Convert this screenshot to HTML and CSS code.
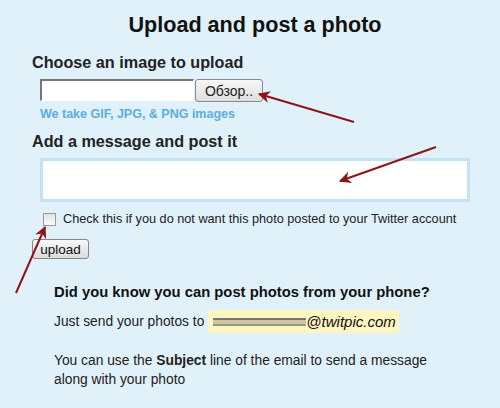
FILE: index.html
```html
<!DOCTYPE html>
<html lang="en">
<head>
    <meta charset="UTF-8">
    <title>Upload and post a photo</title>
    <link rel="stylesheet" href="styles.css">
</head>
<body>
    <div class="page">
        <h1>Upload and post a photo</h1>

        <h2>Choose an image to upload</h2>
        <div class="file-row">
            <span class="file-box"></span>
            <button class="browse">Обзор..</button>
        </div>
        <p class="hint">We take GIF, JPG, &amp; PNG images</p>

        <h2 class="second">Add a message and post it</h2>
        <div class="message"></div>

        <label class="check-row">
            <span class="check"></span>
            Check this if you do not want this photo posted to your Twitter account
        </label>

        <button class="upload">upload</button>

        <div class="phone">
            <h3>Did you know you can post photos from your phone?</h3>
            <p class="send">Just send your photos to
                <span class="email"><span class="blur"></span><em>@twitpic.com</em></span>
            </p>
            <p class="subject">You can use the <b>Subject</b> line of the email to send a message along with your photo</p>
        </div>
    </div>

    <svg class="arrows" width="500" height="408" viewBox="0 0 500 408">
        <defs>
            <marker id="head" viewBox="0 0 10 10" refX="9" refY="5" markerWidth="6" markerHeight="6" orient="auto">
                <path d="M0 0 L10 5 L0 10 L3 5 Z" fill="#8e1418"/>
            </marker>
        </defs>
        <line x1="354" y1="122" x2="259" y2="94" stroke="#8e1418" stroke-width="2" marker-end="url(#head)"/>
        <line x1="436" y1="147" x2="340" y2="181" stroke="#8e1418" stroke-width="2" marker-end="url(#head)"/>
        <line x1="16" y1="293" x2="45" y2="227" stroke="#8e1418" stroke-width="2" marker-end="url(#head)"/>
    </svg>
</body>
</html>
```

FILE: styles.css
```css
body {
    margin: 0;
    background-color: #e1f1fa;
    font-family: "Liberation Sans", Arial, sans-serif;
    color: #222;
    width: 500px;
    height: 408px;
    position: relative;
    overflow: hidden;
}

.page {
    padding: 12px 0 0 32px;
}

h1 {
    margin: 0 0 0 -22px;
    font-size: 21.6px;
    line-height: 26px;
    text-align: center;
    color: #111;
}

h2 {
    margin: 15px 0 0;
    font-size: 16.2px;
    line-height: 19px;
    color: #222;
}

h2.second {
    margin-top: 10px;
}

.file-row {
    display: flex;
    margin: 7px 0 0 8px;
}

.file-box {
    width: 151px;
    height: 19px;
    background: #fff;
    border: 1px solid #fff;
    border-top: 2px solid #777;
    border-left: 2px solid #777;
}

.browse {
    width: 68px;
    height: 23px;
    margin-left: 1px;
    padding: 0;
    font-family: "Liberation Sans", Arial, sans-serif;
    font-size: 14px;
    color: #222;
    background: linear-gradient(#f6f6f6, #dedede);
    border: 1px solid #8a8a8a;
    border-radius: 3px;
}

.hint {
    margin: 5px 0 0 8px;
    font-size: 12.5px;
    line-height: 15px;
    font-weight: bold;
    color: #5aaee0;
}

.message {
    margin: 7px 0 0 8px;
    width: 424px;
    height: 38px;
    background: #fff;
    border: 3px solid #c4e1f5;
}

.check-row {
    display: flex;
    align-items: center;
    margin: 10px 0 0 11px;
    font-size: 12.7px;
    color: #222;
    gap: 7px;
}

.check {
    width: 11px;
    height: 11px;
    border: 1px solid #9a9a9a;
    background: linear-gradient(#e2e2e2, #fafafa);
}

.upload {
    display: block;
    margin-top: 13px;
    width: 57px;
    height: 20px;
    padding: 0;
    font-family: "Liberation Sans", Arial, sans-serif;
    font-size: 13.5px;
    color: #111;
    background: linear-gradient(#f8f8f8, #dcdcdc);
    border: 1px solid #888;
    border-radius: 3px;
}

.phone {
    margin: 25px 0 0 22px;
    font-size: 13.8px;
    color: #222;
}

.phone h3 {
    margin: 0;
    font-size: 14.8px;
    line-height: 17px;
    color: #111;
}

.send {
    display: flex;
    align-items: center;
    margin: 9px 0 0;
}

.email {
    display: flex;
    align-items: center;
    margin-left: 4px;
    padding: 0 3px 0 5px;
    height: 23px;
    background: #fdf6c2;
}

.blur {
    width: 93px;
    height: 4px;
    border-top: 2px solid #777;
    border-bottom: 2px solid #9a9a80;
    background: #ccc7a0;
    filter: blur(0.7px);
}

.email em {
    font-size: 15px;
    color: #111;
}

.subject {
    margin: 18px 0 0;
    width: 390px;
    line-height: 19px;
}

.arrows {
    position: absolute;
    left: 0;
    top: 0;
}
```
